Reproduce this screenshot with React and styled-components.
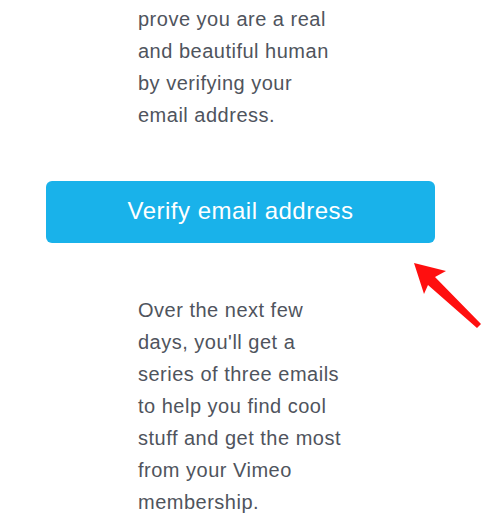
import React from "react";
import styled, { createGlobalStyle } from "styled-components";

const GlobalStyle = createGlobalStyle`
  html, body {
    margin: 0;
    padding: 0;
    background: #ffffff;
    overflow: hidden;
  }
`;

const Page = styled.div`
  position: relative;
  width: 492px;
  height: 527px;
  overflow: hidden;
  font-family: "Liberation Sans", Arial, sans-serif;
`;

const Column = styled.div`
  display: flex;
  flex-direction: column;
  padding-left: 46px;
  margin-top: -29px;
`;

const Paragraph = styled.p`
  margin: 0;
  padding-left: 92px;
  font-size: 20px;
  line-height: 32px;
  letter-spacing: 0.5px;
  color: #4f545d;
`;

const Button = styled.a`
  display: flex;
  align-items: center;
  justify-content: center;
  width: 389px;
  height: 62px;
  margin: ${(p) => p.$space};
  border-radius: 6px;
  background: #19b2ea;
  color: #ffffff;
  font-size: 24px;
  letter-spacing: 0.5px;
  text-decoration: none;
  padding-bottom: 2px;
  box-sizing: border-box;
`;

const Arrow = styled.svg`
  position: absolute;
  left: 408px;
  top: 258px;
`;

export default function App() {
  return (
    <Page>
      <GlobalStyle />
      <Column>
        <Paragraph>
          Thanks for joining us! Please
          <br />
          prove you are a real
          <br />
          and beautiful human
          <br />
          by verifying your
          <br />
          email address.
        </Paragraph>
        <Button $space="50px 0 51px" href="#">
          Verify email address
        </Button>
        <Paragraph>
          Over the next few
          <br />
          days, you'll get a
          <br />
          series of three emails
          <br />
          to help you find cool
          <br />
          stuff and get the most
          <br />
          from your Vimeo
          <br />
          membership.
        </Paragraph>
      </Column>
      <Arrow width="80" height="75" viewBox="408 258 80 75">
        <polygon
          points="414,263 446,271 435,277 481,324 477,328 428,285 424,294"
          fill="#ff0f0f"
        />
      </Arrow>
    </Page>
  );
}
